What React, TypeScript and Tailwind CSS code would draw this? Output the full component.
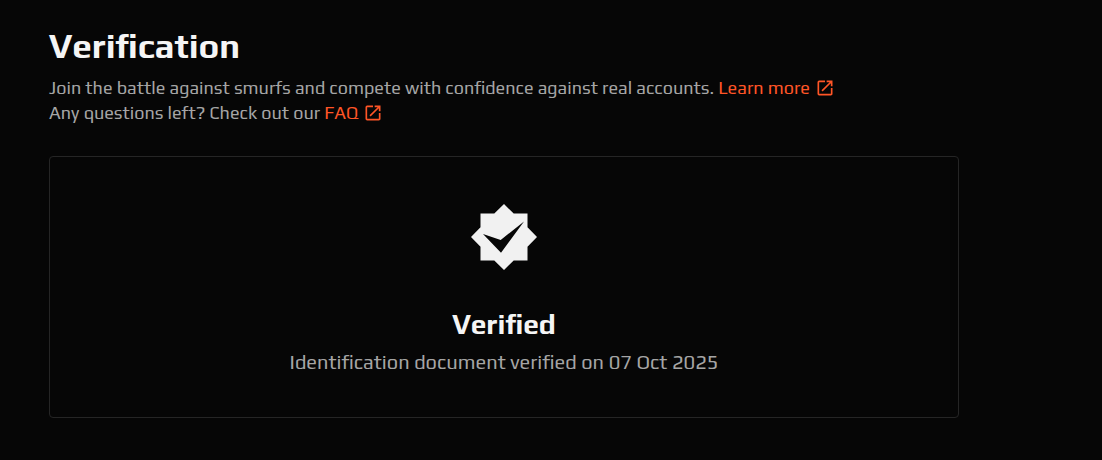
import type { ReactNode } from "react";
import { MdOpenInNew } from "react-icons/md";

interface ExternalLinkProps {
  href: string;
  children: ReactNode;
}

function ExternalLink({ href, children }: ExternalLinkProps) {
  return (
    <a
      href={href}
      target="_blank"
      rel="noreferrer"
      className="inline-flex items-center gap-[5px] text-[#ff5526] hover:underline"
    >
      {children}
      <MdOpenInNew size={20} aria-hidden="true" />
    </a>
  );
}

function VerifiedBadge() {
  return (
    <svg width="66" height="66" viewBox="0 0 66 66" aria-hidden="true">
      <path
        fill="#f1f1f1"
        d="M33 0 42.7 9.5H56.5V23.3L66 33 56.5 42.7V56.5H42.7L33 66 23.3 56.5H9.5V42.7L0 33 9.5 23.3V9.5H23.3Z"
      />
      <path fill="#060606" d="M12 30 29.7 36 53 17.5 30 48.7Z" />
    </svg>
  );
}

export default function App() {
  return (
    <main className="min-h-screen bg-[#060606] px-[49px] py-7 font-['Play','Roboto',sans-serif] text-[#a5a5a5]">
      <header>
        <h1 className="text-[35px] leading-9 font-bold text-[#f5f5f5]">Verification</h1>
        <div className="mt-[11px] text-[18px] leading-[25px]">
          <p>
            Join the battle against smurfs and compete with confidence against real accounts.{" "}
            <ExternalLink href="#learn-more">Learn more</ExternalLink>
          </p>
          <p>
            Any questions left? Check out our <ExternalLink href="#faq">FAQ</ExternalLink>
          </p>
        </div>
      </header>

      <section className="mt-[31px] flex max-w-[910px] flex-col items-center rounded border border-[#252525] px-6 pt-[47px] pb-[41px] text-center">
        <VerifiedBadge />
        <h2 className="mt-[38px] text-[28px] leading-8 font-bold text-[#f5f5f5]">Verified</h2>
        <p className="mt-2 text-[20px] leading-7">Identification document verified on 07 Oct 2025</p>
      </section>
    </main>
  );
}
